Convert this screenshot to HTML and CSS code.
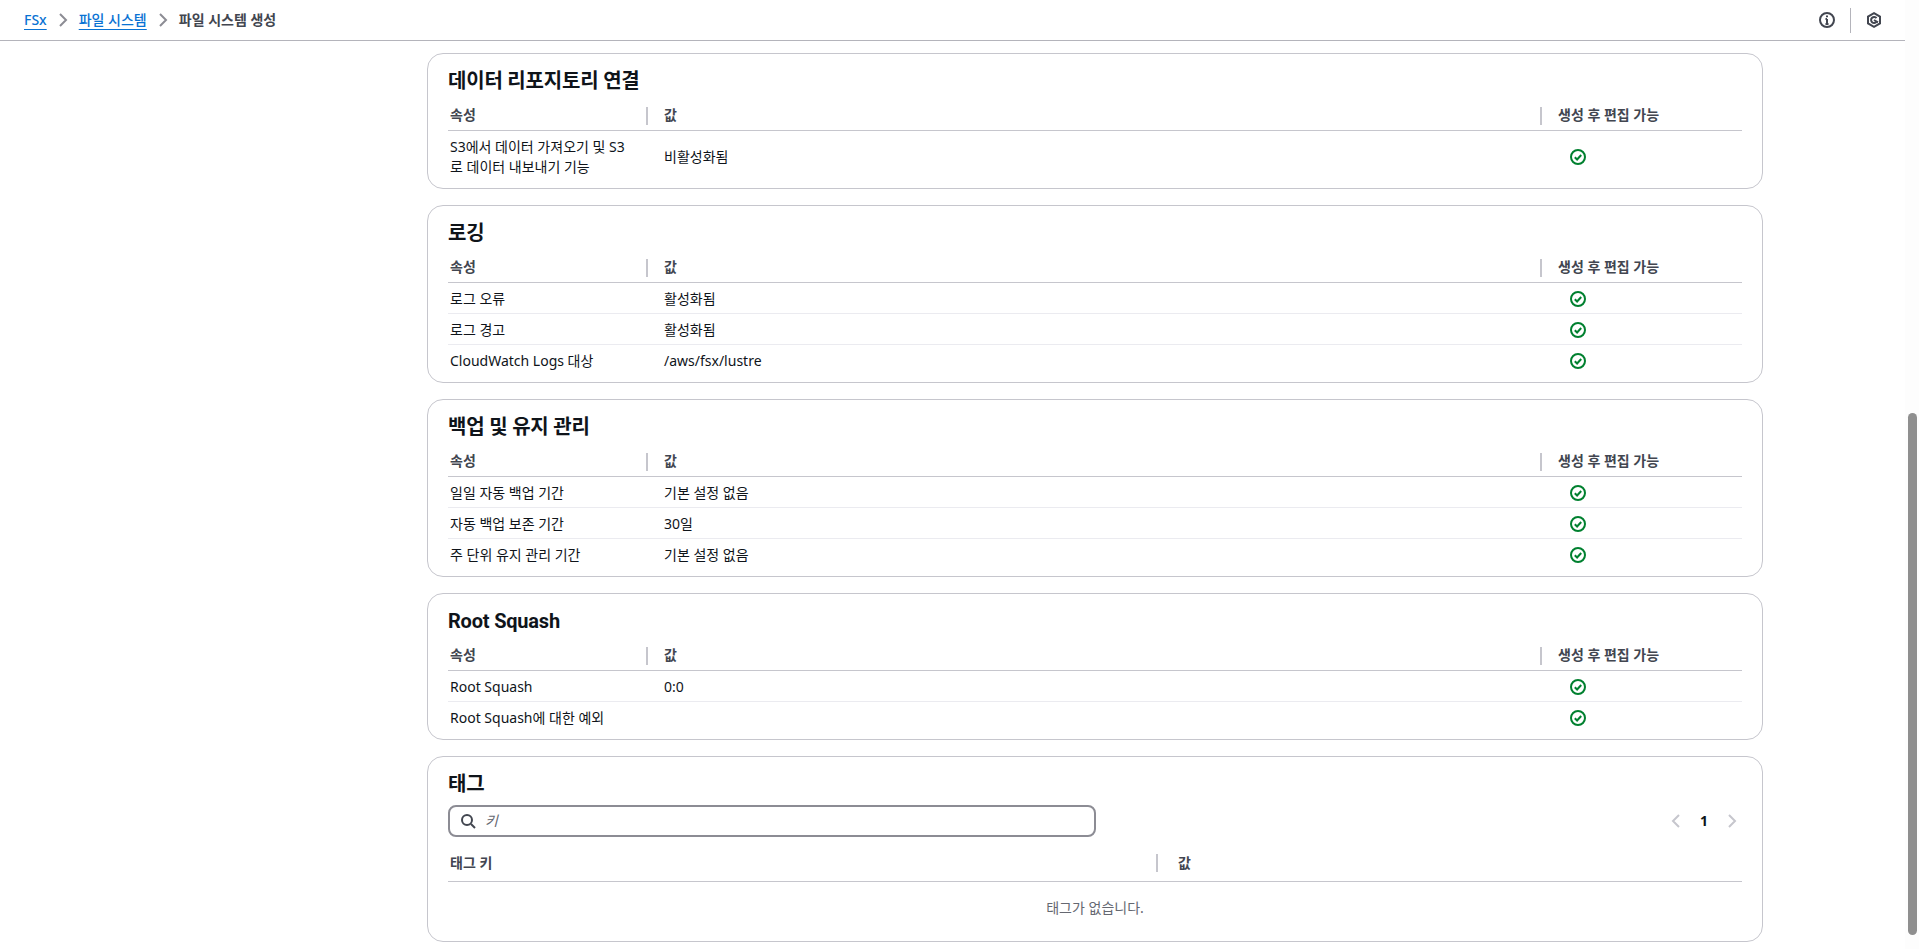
FILE: index.html
```html
<!DOCTYPE html>
<html lang="ko">
<head>
<meta charset="utf-8">
<title>파일 시스템 생성</title>
<link rel="stylesheet" href="styles.css">
</head>
<body>
<div class="viewport">
  <div class="page">
    <header class="topbar">
      <nav class="crumbs">
        <a class="crumb-link" href="#">FSx</a>
        <svg class="chev" viewBox="0 0 16 16"><path d="M5 2l6 6-6 6"/></svg>
        <a class="crumb-link" href="#">파일 시스템</a>
        <svg class="chev" viewBox="0 0 16 16"><path d="M5 2l6 6-6 6"/></svg>
        <span class="crumb-current">파일 시스템 생성</span>
      </nav>
      <div class="tools">
        <svg class="tool-icon" viewBox="0 0 16 16"><circle cx="8" cy="8" r="7"/><path d="M8 7v5M6.5 12h3M6.5 7H8"/><path d="M8 3.6v1.6"/></svg>
        <span class="tool-sep"></span>
        <svg class="tool-icon" viewBox="0 0 16 16"><path d="M8 1.2l6 3.4v6.800l-6 3.400-6-3.400V4.600z"/><path d="M10.500 6.200A3 3 0 1 0 10.500 9.800"/><path d="M8 8l4 2.300"/></svg>
      </div>
    </header>
    <main class="content">
      <section class="card">
        <h2 class="card-title">데이터 리포지토리 연결</h2>
        <table class="props">
          <thead><tr><th class="c1">속성</th><th class="c2 sep">값</th><th class="c3 sep">생성 후 편집 가능</th></tr></thead>
          <tbody>
            <tr><td>S3에서 데이터 가져오기 및 S3로 데이터 내보내기 기능</td><td>비활성화됨</td><td><svg class="check" viewBox="0 0 16 16"><circle cx="8" cy="8" r="7"/><path d="M4.800 8.200l2.300 2.300 4.100-4.500"/></svg></td></tr>
          </tbody>
        </table>
      </section>
      <section class="card">
        <h2 class="card-title">로깅</h2>
        <table class="props">
          <thead><tr><th class="c1">속성</th><th class="c2 sep">값</th><th class="c3 sep">생성 후 편집 가능</th></tr></thead>
          <tbody>
            <tr><td>로그 오류</td><td>활성화됨</td><td><svg class="check" viewBox="0 0 16 16"><circle cx="8" cy="8" r="7"/><path d="M4.800 8.200l2.300 2.300 4.100-4.500"/></svg></td></tr>
            <tr><td>로그 경고</td><td>활성화됨</td><td><svg class="check" viewBox="0 0 16 16"><circle cx="8" cy="8" r="7"/><path d="M4.800 8.200l2.300 2.300 4.100-4.500"/></svg></td></tr>
            <tr><td>CloudWatch Logs 대상</td><td>/aws/fsx/lustre</td><td><svg class="check" viewBox="0 0 16 16"><circle cx="8" cy="8" r="7"/><path d="M4.800 8.200l2.300 2.300 4.100-4.500"/></svg></td></tr>
          </tbody>
        </table>
      </section>
      <section class="card">
        <h2 class="card-title">백업 및 유지 관리</h2>
        <table class="props">
          <thead><tr><th class="c1">속성</th><th class="c2 sep">값</th><th class="c3 sep">생성 후 편집 가능</th></tr></thead>
          <tbody>
            <tr><td>일일 자동 백업 기간</td><td>기본 설정 없음</td><td><svg class="check" viewBox="0 0 16 16"><circle cx="8" cy="8" r="7"/><path d="M4.800 8.200l2.300 2.300 4.100-4.500"/></svg></td></tr>
            <tr><td>자동 백업 보존 기간</td><td>30일</td><td><svg class="check" viewBox="0 0 16 16"><circle cx="8" cy="8" r="7"/><path d="M4.800 8.200l2.300 2.300 4.100-4.500"/></svg></td></tr>
            <tr><td>주 단위 유지 관리 기간</td><td>기본 설정 없음</td><td><svg class="check" viewBox="0 0 16 16"><circle cx="8" cy="8" r="7"/><path d="M4.800 8.200l2.300 2.300 4.100-4.500"/></svg></td></tr>
          </tbody>
        </table>
      </section>
      <section class="card">
        <h2 class="card-title">Root Squash</h2>
        <table class="props">
          <thead><tr><th class="c1">속성</th><th class="c2 sep">값</th><th class="c3 sep">생성 후 편집 가능</th></tr></thead>
          <tbody>
            <tr><td>Root Squash</td><td>0:0</td><td><svg class="check" viewBox="0 0 16 16"><circle cx="8" cy="8" r="7"/><path d="M4.800 8.200l2.300 2.300 4.100-4.500"/></svg></td></tr>
            <tr><td>Root Squash에 대한 예외</td><td></td><td><svg class="check" viewBox="0 0 16 16"><circle cx="8" cy="8" r="7"/><path d="M4.800 8.200l2.300 2.300 4.100-4.500"/></svg></td></tr>
          </tbody>
        </table>
      </section>
      <section class="card">
        <h2 class="card-title">태그</h2>
        <div class="toolbar">
          <label class="search">
            <svg class="search-icon" viewBox="0 0 16 16"><circle cx="7" cy="7" r="5"/><path d="M11 11l4 4"/></svg>
            <input class="search-input" type="text" placeholder="키">
          </label>
          <div class="pager">
            <svg class="pager-chev" viewBox="0 0 16 16"><path d="M11 2L5 8l6 6"/></svg>
            <span class="pager-num">1</span>
            <svg class="pager-chev" viewBox="0 0 16 16"><path d="M5 2l6 6-6 6"/></svg>
          </div>
        </div>
        <table class="tags">
          <thead><tr><th class="t1">태그 키</th><th class="t2 sep">값</th></tr></thead>
          <tbody><tr><td class="empty" colspan="2">태그가 없습니다.</td></tr></tbody>
        </table>
      </section>
    </main>
  </div>
  <div class="scrollbar"><div class="thumb"></div></div>
</div>
</body>
</html>
```
FILE: styles.css
```css
* { box-sizing: border-box; }
html, body { margin: 0; height: 100%; overflow: hidden; background: #fff; }
body {
  font-family: "Noto Sans", "Noto Sans CJK KR", sans-serif;
  font-size: 14px;
  line-height: 20px;
  color: #0f141a;
}
.viewport { display: flex; height: 949px; }
.page { flex: 1; min-width: 0; }
.topbar {
  height: 41px;
  border-bottom: 1px solid #b4b4bb;
  display: flex;
  align-items: center;
  justify-content: space-between;
  padding: 0 23px 0 24px;
}
.crumbs { display: flex; align-items: center; }
.crumb-link {
  color: #0972d3;
  text-decoration: underline;
  text-decoration-skip-ink: none;
  text-underline-offset: 4px;
  font-weight: 500;
}
.crumb-current { color: #424650; font-weight: 700; }
.chev { width: 16px; height: 16px; margin: 0 8px; fill: none; stroke: #8c8c94; stroke-width: 2; }
.tools { display: flex; align-items: center; }
.tool-icon { width: 16px; height: 16px; fill: none; stroke: #424650; stroke-width: 2; }
.tool-sep { width: 1px; height: 25px; background: #b4b4bb; margin: 0 15px; }
.content { margin-left: 427px; width: 1336px; padding-top: 12px; }
.card {
  border: 1px solid #c6c6cd;
  border-radius: 16px;
  padding: 15px 20px 6px;
  margin-bottom: 16px;
}
.card-title {
  margin: 0 0 13px;
  padding-top: 1px;
  font-family: Roboto, "Noto Sans CJK KR", sans-serif;
  font-size: 20px;
  line-height: 22px;
  letter-spacing: -0.2px;
  font-weight: 700;
  color: #0f141a;
}
table { width: 100%; border-collapse: separate; border-spacing: 0; table-layout: fixed; }
th {
  position: relative;
  text-align: left;
  font-weight: 700;
  color: #424650;
  border-bottom: 1px solid #c6c6cd;
  padding: 0 2px 5px;
}
.props .c1 { width: 199px; }
.props .c3 { width: 201px; }
.props .sep, .tags .sep { padding-left: 17px; }
.sep::before {
  content: "";
  position: absolute;
  left: -1px;
  top: 2px;
  width: 2px;
  height: 18px;
  background: #c6c6cd;
}
td { padding: 6px 10px 4px 2px; border-bottom: 1px solid #ebebf0; vertical-align: middle; }
td + td { padding-left: 17px; }
tbody tr:last-child td { border-bottom-color: transparent; }
.check {
  display: block;
  width: 16px;
  height: 16px;
  margin: 2px 0 2px 12px;
  fill: none;
  stroke: #00802f;
  stroke-width: 2;
}
.toolbar { display: flex; justify-content: space-between; align-items: center; margin-top: -3px; }
.search {
  width: 648px;
  height: 32px;
  border: 2px solid #8c8c94;
  border-radius: 8px;
  display: flex;
  align-items: center;
  padding-left: 10px;
}
.search-icon { width: 16px; height: 16px; flex: none; fill: none; stroke: #424650; stroke-width: 2; }
.search-input {
  flex: 1;
  min-width: 0;
  border: 0;
  outline: 0;
  background: transparent;
  font: inherit;
  padding: 0 0 0 9px;
}
.search-input::placeholder { color: #656871; font-style: italic; opacity: 1; }
.pager { display: flex; align-items: center; gap: 14px; padding-right: 2px; }
.pager-chev { width: 16px; height: 16px; fill: none; stroke: #c6c6cd; stroke-width: 2; }
.pager-num { font-weight: 700; width: 12px; text-align: center; color: #0f141a; }
.tags { margin-top: 16px; }
.tags th { padding: 0 2px 8px; }
.tags .t1 { width: 709px; }
.tags .sep { padding-left: 21px; }
.tags .sep::before { top: 1px; }
td.empty { text-align: center; color: #656871; padding: 16px 0 16px; }
.scrollbar { width: 14px; flex: none; background: #fdfdfd; padding: 413px 2px 14px 3px; }
.thumb { width: 9px; height: 522px; background: #8f8f8f; border-radius: 5px; }
```
